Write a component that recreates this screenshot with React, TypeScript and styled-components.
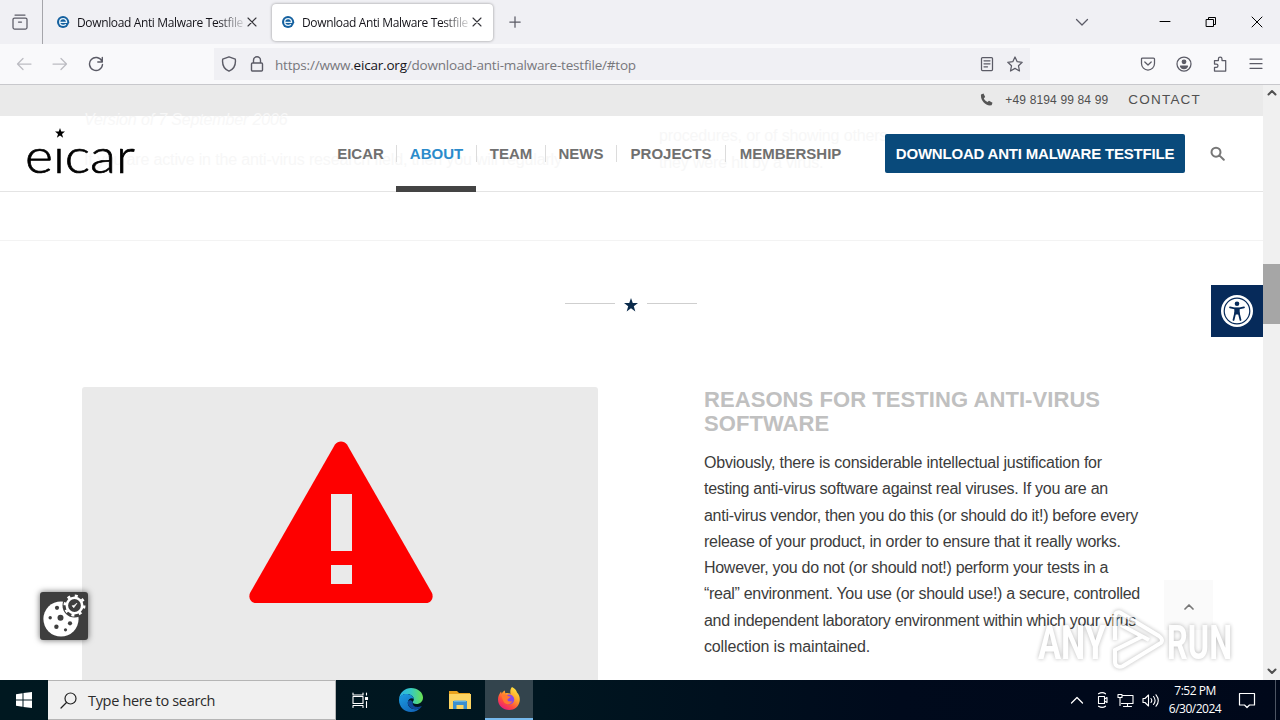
import React from 'react';
import styled, { createGlobalStyle, css } from 'styled-components';

const GlobalStyle = createGlobalStyle`
  * {
    box-sizing: border-box;
  }

  body {
    margin: 0;
    overflow: hidden;
    font-family: 'Liberation Sans', Arial, sans-serif;
  }

  svg {
    display: block;
    flex-shrink: 0;
  }
`;

const Screen = styled.div`
  display: flex;
  flex-direction: column;
  width: 1280px;
  height: 720px;
  overflow: hidden;
  background: #fff;
`;

/* ---------- browser chrome ---------- */

const TabBar = styled.div`
  display: flex;
  align-items: center;
  height: 44px;
  background: #f0f0f4;
  color: #15141a;
`;

const RecentTabs = styled.div`
  display: flex;
  align-items: center;
  justify-content: center;
  width: 43px;
  height: 44px;
  padding-right: 2px;
  margin-right: 4px;
  border-right: 1px solid #a5a5aa;
`;

const TabItem = styled.div<{ $active?: boolean }>`
  display: flex;
  align-items: center;
  width: 221px;
  height: 37px;
  margin-right: 4px;
  padding-left: 9px;
  border-radius: 4px;

  ${({ $active }) => $active && css`
    background: #fff;
    box-shadow: 0 0 3px rgba(0, 0, 0, 0.4);
  `}
`;

const TabTitle = styled.div`
  width: 168px;
  margin: 1px 2px 0 7px;
  overflow: hidden;
  white-space: nowrap;
  font-family: 'Open Sans', sans-serif;
  font-size: 12px;
  line-height: 18px;
  letter-spacing: -0.36px;
  mask-image: linear-gradient(to right, #000 140px, rgba(0, 0, 0, 0.15) 166px);
`;

const NewTab = styled.div`
  margin-left: 12px;
`;

const WindowControls = styled.div`
  display: flex;
  align-items: center;
  gap: 34px;
  margin-left: auto;
  padding-right: 17px;
`;

const ListTabs = styled.div`
  margin-right: 36px;
`;

const NavBar = styled.div`
  display: flex;
  align-items: center;
  height: 41px;
  border-bottom: 1px solid #c8c8cc;
  background: #f9f9fb;
`;

const NavButtons = styled.div`
  display: flex;
  align-items: center;
  gap: 20px;
  width: 214px;
  padding-left: 16px;
`;

const UrlBar = styled.div`
  display: flex;
  align-items: center;
  width: 816px;
  height: 32px;
  padding: 0 7px;
  background: #f0f0f4;
`;

const LockHolder = styled.div`
  margin: 0 10px 0 12px;
`;

const Url = styled.div`
  flex: 1;
  padding-top: 2px;
  white-space: nowrap;
  font-family: 'Open Sans', sans-serif;
  font-size: 13.5px;
  line-height: 20px;
  letter-spacing: -0.2px;
  color: #77777c;
`;

const Host = styled.span`
  color: #15141a;
`;

const UrlActions = styled.div`
  display: flex;
  align-items: center;
  gap: 12px;
`;

const Toolbar = styled.div`
  display: flex;
  align-items: center;
  gap: 20px;
  margin-left: auto;
  padding-right: 16px;
`;

/* ---------- page ---------- */

const Viewport = styled.div`
  display: flex;
  height: 595px;
`;

const Page = styled.div`
  position: relative;
  display: flex;
  flex-direction: column;
  width: 1263px;
  overflow: hidden;
  background: #fff;

  > * {
    flex-shrink: 0;
  }
`;

const Scrollbar = styled.div`
  display: flex;
  flex-direction: column;
  align-items: center;
  width: 17px;
  padding: 3px 0 4px;
  background: #f0f0f0;
`;

const Thumb = styled.div`
  width: 17px;
  height: 60px;
  margin: 166px 0 auto;
  background: #a6a6a6;
`;

const TopBar = styled.div`
  display: flex;
  align-items: center;
  justify-content: flex-end;
  height: 31px;
  padding: 0 62px 2px 0;
  background: #eaeaea;
  color: #505050;
`;

const Phone = styled.div`
  width: 104px;
  margin: 0 19px 0 12px;
  white-space: nowrap;
  font-size: 12px;
  letter-spacing: 0.15px;
`;

const Contact = styled.div`
  font-size: 13.5px;
  letter-spacing: 1.2px;
`;

const Header = styled.div`
  position: relative;
  display: flex;
  align-items: center;
  height: 76px;
  border-bottom: 1px solid #e4e4e4;
`;

const Ghost = styled.div<{ $left: number; $top: number; $italic?: boolean }>`
  position: absolute;
  left: ${({ $left }) => $left}px;
  top: ${({ $top }) => $top}px;
  white-space: nowrap;
  font-size: 16px;
  line-height: 20px;
  letter-spacing: -0.15px;
  font-style: ${({ $italic }) => ($italic ? 'italic' : 'normal')};
  color: #f7f7f7;
`;

const Logo = styled.div`
  position: relative;
  width: 325px;
  height: 75px;
  padding-left: 25px;
`;

const LogoText = styled.div`
  width: 110px;
  transform: scaleX(1.115);
  transform-origin: left;
  font-family: Lato, sans-serif;
  font-weight: 300;
  font-size: 48px;
  line-height: 77px;
  color: #000;
  -webkit-text-stroke: 0.7px #000;
`;

const LogoStar = styled.div`
  position: absolute;
  left: 55px;
  top: 12px;
`;

const Menu = styled.div`
  position: relative;
  display: flex;
  width: 560px;
`;

const MenuItem = styled.div<{ $width: number; $active?: boolean }>`
  position: relative;
  display: flex;
  align-items: center;
  justify-content: center;
  width: ${({ $width }) => $width}px;
  height: 76px;
  padding-right: 1px;
  white-space: nowrap;
  font-size: 15px;
  font-weight: bold;
  color: ${({ $active }) => ($active ? '#2b8bcb' : '#707070')};

  &:not(:last-child)::before {
    content: '';
    position: absolute;
    right: 0;
    top: 29px;
    width: 1px;
    height: 17px;
    background: #dcdcdc;
  }

  ${({ $active }) => $active && css`
    &::after {
      content: '';
      position: absolute;
      left: -1px;
      bottom: 0;
      width: 80px;
      height: 6px;
      background: #444;
    }
  `}
`;

const DownloadButton = styled.div`
  position: relative;
  display: flex;
  align-items: center;
  justify-content: center;
  width: 300px;
  height: 39px;
  margin-right: 25px;
  border-radius: 2px;
  background: #094a7b;
  white-space: nowrap;
  font-size: 15px;
  font-weight: bold;
  letter-spacing: -0.2px;
  color: #fff;
`;

const Strip = styled.div`
  height: 49px;
  border-bottom: 1px solid #f3f3f3;
`;

const Divider = styled.div`
  display: flex;
  align-items: center;
  justify-content: center;
  gap: 9px;
  height: 126px;
  padding: 0 1px 1px 0;
`;

const Rule = styled.div`
  width: 50px;
  height: 1px;
  background: #cfcfcf;
`;

const DividerStar = styled.div`
  padding-top: 2px;
`;

const Section = styled.div`
  display: flex;
  padding: 20px 0 0 82px;
`;

const Figure = styled.div`
  display: flex;
  justify-content: center;
  width: 516px;
  height: 320px;
  padding: 54px 0 0 1px;
  border-radius: 3px;
  background: #eaeaea;
`;

const Article = styled.div`
  margin-left: 106px;
`;

const Heading = styled.h3`
  margin: 0;
  padding-top: 1px;
  white-space: nowrap;
  font-size: 22px;
  line-height: 24px;
  letter-spacing: 0.07px;
  color: #c0c0c0;
`;

const Paragraph = styled.div`
  margin-top: 14px;
  color: #3c3c3c;
`;

const Line = styled.div<{ $spacing: number }>`
  white-space: nowrap;
  font-size: 16px;
  line-height: 26.3px;
  letter-spacing: ${({ $spacing }) => $spacing}px;
`;

const AccessButton = styled.div`
  position: absolute;
  right: 0;
  top: 200px;
  display: flex;
  align-items: center;
  justify-content: center;
  width: 52px;
  height: 52px;
  background: #062a5a;
`;

const CookieButton = styled.div`
  position: absolute;
  left: 40px;
  top: 507px;
  width: 48px;
  height: 48px;
  border-radius: 3px;
  background: #3e3e3e;
  box-shadow: 0 0 6px rgba(0, 0, 0, 0.6);
`;

const ScrollTop = styled.div`
  position: absolute;
  left: 1164px;
  top: 495px;
  display: flex;
  align-items: center;
  justify-content: center;
  width: 49px;
  height: 50px;
  padding-top: 3px;
  background: #fafafa;
`;

const Watermark = styled.div`
  position: absolute;
  left: 1038px;
  top: 522px;
  width: 210px;
  height: 66px;
  opacity: 0.7;
  filter: drop-shadow(0 0 2px rgba(0, 0, 0, 0.4));
`;

/* ---------- taskbar ---------- */

const Taskbar = styled.div`
  display: flex;
  height: 40px;
  background: linear-gradient(to right, #001820 0, #001620 540px, #000a1c 900px, #00081a 100%);
  font-family: 'Open Sans', sans-serif;
  color: #fff;
`;

const TaskButton = styled.div<{ $active?: boolean }>`
  display: flex;
  align-items: center;
  justify-content: center;
  width: 48px;
  height: 40px;
  margin-right: 1px;

  ${({ $active }) => $active && css`
    border-bottom: 2px solid #76b9ed;
    background: #33444d;
  `}
`;

const StartButton = styled(TaskButton)`
  margin-right: 0;
`;

const TaskViewButton = styled(TaskButton)`
  margin-right: 3px;
`;

const SearchBox = styled.div`
  display: flex;
  align-items: center;
  gap: 11px;
  width: 288px;
  padding-left: 12px;
  border: 1px solid #b5b5b5;
  border-left: 0;
  background: #f0f0f0;
  font-size: 14.5px;
  letter-spacing: -0.33px;
  color: #2b2b2b;
`;

const Tray = styled.div`
  display: flex;
  align-items: center;
  gap: 8px;
  margin-left: auto;
`;

const Clock = styled.div`
  width: 56px;
  margin-right: -1px;
  text-align: center;
  white-space: nowrap;
  font-size: 12px;
  line-height: 18px;
  letter-spacing: -0.5px;
`;

const ShowDesktop = styled.div`
  width: 5px;
  height: 40px;
  margin-left: 3px;
  border-left: 1px solid #4d5563;
`;

type GlyphProps = {
  size?: number;
  color?: string;
  stroke?: number;
  children: React.ReactNode;
};

const Glyph = ({ size = 16, color = '#5b5b66', stroke = 1.25, children }: GlyphProps) => (
  <svg
    width={size}
    height={size}
    viewBox={`0 0 ${size} ${size}`}
    fill="none"
    stroke={color}
    strokeWidth={stroke}
    strokeLinecap="round"
    strokeLinejoin="round"
  >
    {children}
  </svg>
);

const Favicon = () => (
  <svg width="14" height="14" viewBox="0 0 14 14">
    <circle cx="7" cy="7" r="6" fill="#14609f" />
    <path d="M3.6 7.4h7c.2-2.300-1.400-3.700-3.400-3.700S3.700 5.200 3.700 7.100s1.500 3.300 3.500 3.300c1.200 0 2-.4 2.700-1.100" fill="none" stroke="#e8f3fa" strokeWidth="1.300" />
    <path d="M12.200 4.500l1.300 3-1.600 1z" fill="#14609f" />
  </svg>
);

const CloseIcon = () => (
  <Glyph size={10} color="#35343a" stroke={1.100}>
    <path d="M1 1l8 8M9 1l-8 8" />
  </Glyph>
);

const Star = ({ size, color }: { size: number; color: string }) => (
  <svg width={size} height={size} viewBox="0 0 20 20">
    <path d="M10 0l2.500 7.200H20l-6 4.600 2.200 7.500L10 14.800 3.800 19.300 6 11.800 0 7.200h7.500z" fill={color} />
  </svg>
);

const WarningSign = () => (
  <svg width="184" height="163" viewBox="0 0 184 163">
    <path
      d="M86 3.500C89-.5 95-.5 98 3.500L183 152c2 5-1 10-6 10H7c-5 0-8-5-6-10z"
      fill="#fe0000"
    />
    <path d="M82 53h21v57H82zM82 124h21v19H82z" fill="#eaeaea" />
  </svg>
);

const AccessIcon = () => (
  <svg width="32" height="32" viewBox="0 0 32 32">
    <circle cx="16" cy="16" r="16" fill="#fff" />
    <circle cx="16" cy="16" r="12.800" fill="none" stroke="#062a5a" strokeWidth="1.200" />
    <circle cx="16" cy="8.700" r="2.300" fill="#062a5a" />
    <path
      d="M9 12.300l4.500 1h5L23 12.300M14.200 18l-1.700 7M17.800 18l1.700 7"
      fill="none"
      stroke="#062a5a"
      strokeWidth="1.800"
      strokeLinecap="round"
    />
    <path d="M13.300 12.800h5.400v6.700h-5.400z" fill="#062a5a" />
  </svg>
);

const CookieIcon = () => (
  <svg width="48" height="48" viewBox="0 0 48 48">
    <circle cx="21" cy="27" r="17.600" fill="#fff" />
    <g fill="#3e3e3e">
      <circle cx="20.500" cy="25.800" r="3" />
      <circle cx="17" cy="15.800" r="2.100" />
      <circle cx="10.200" cy="25.700" r="1.700" />
      <circle cx="16.400" cy="34.700" r="2.200" />
      <circle cx="30" cy="31.300" r="2.100" />
      <circle cx="25.500" cy="37.800" r="1.600" />
      <circle cx="34.500" cy="13.500" r="12" />
    </g>
    <circle cx="34.500" cy="13.500" r="7.700" fill="none" stroke="#fff" strokeWidth="2.600" />
    <circle cx="34.500" cy="13.500" r="9.700" fill="none" stroke="#fff" strokeWidth="2.600" strokeDasharray="3 4.618" />
    <path d="M32 13.800l1.800 2 3.200-4.600-3 2.200z" fill="#fff" stroke="#fff" strokeWidth="0.600" />
  </svg>
);

const WatermarkDrawing = () => (
  <svg width="210" height="66" viewBox="0 0 210 66" fontFamily="Roboto, sans-serif" fontWeight="700" fontSize="49" fill="#fff">
    <text x="0" y="52" textLength="68" lengthAdjust="spacingAndGlyphs">ANY</text>
    <text x="129" y="52" textLength="65" lengthAdjust="spacingAndGlyphs">RUN</text>
    <path
      d="M77 33V10c0-4 3-6 6-4l38 23c4 3 4 6 0 8L85 59c-4 2-8 0-8-4V43l28-14M83 18l28 15"
      fill="none"
      stroke="#fff"
      strokeWidth="4"
    />
  </svg>
);

const EdgeIcon = () => (
  <svg width="24" height="24" viewBox="0 0 24 24">
    <defs>
      <linearGradient id="edgeTop" x1="0" x2="1" y1="0.300" y2="0.300">
        <stop offset="0" stopColor="#2bb3e8" />
        <stop offset="0.500" stopColor="#36c9c3" />
        <stop offset="1" stopColor="#6ae34f" />
      </linearGradient>
      <linearGradient id="edgeBody" x1="0" x2="0.800" y1="0" y2="1">
        <stop offset="0" stopColor="#1b9de2" />
        <stop offset="1" stopColor="#1263b8" />
      </linearGradient>
    </defs>
    <path d="M0 11C1 4 6 0 12 0c7 0 12 4.500 12 9.500 0 4-3 6.500-6.500 6.500-3 0-4-1.200-3.700-2 .5-1 1-1.500 1-3C14.800 8 11 6 7.500 6 4 6 1 8 0 11z" fill="url(#edgeTop)" />
    <path d="M0 12c0-3.500 3.200-6 7.200-6 4.300 0 7.300 2.300 7.600 5-2-1.700-5.800-.3-6 3.500C8.600 19 13 22 18 21c2-.4 3-1 4.300-2C20 22 16 24 12 24 5 24 0 18.500 0 12z" fill="url(#edgeBody)" />
    <path d="M8.800 14.500c0 4.500 4.700 7.500 9.200 6.500 2-.4 3-1 4.300-2 .5-.8.300-1-.3-.8-4.500 1.800-9 .3-8.200-4.200-1.500-2.500-5-2-5 .5z" fill="#10499b" />
  </svg>
);

const FolderIcon = () => (
  <svg width="22" height="18" viewBox="0 0 22 18">
    <path d="M0 0h8l2 2h11v5H0z" fill="#e8a21d" />
    <path d="M0 3h22v15H0z" fill="#fcd462" />
    <path d="M4 10h14v8h-3.500v-4h-7v4H4z" fill="#3b8fd0" />
    <path d="M5 9.500h12v1.500H5z" fill="#64b2e4" />
  </svg>
);

const FirefoxIcon = () => (
  <svg width="24" height="24" viewBox="0 0 24 24">
    <defs>
      <linearGradient id="fox" x1="0.850" x2="0.200" y1="0" y2="1">
        <stop offset="0" stopColor="#fff044" />
        <stop offset="0.400" stopColor="#ffa12b" />
        <stop offset="0.700" stopColor="#ff4b3e" />
        <stop offset="1" stopColor="#e31587" />
      </linearGradient>
    </defs>
    <path d="M15 0c3 1.600 4.500 3.500 5 5.500 2.500 2.500 3.200 6 2.600 9C21.700 19.500 17.500 23 12.200 23 6 23 1 18.500 1 12.500 1 9.500 2.200 7 4 4.500l.8 2.200C5.500 5.200 6.500 4.300 7.800 3.600l.5 2.700c2-.6 3.900-.3 5.200.7C13 4.500 13.300 2 15 0z" fill="url(#fox)" />
    <circle cx="12.200" cy="12.500" r="5" fill="#8748e8" />
    <path d="M4.500 8.500c2-1.500 5-1.500 7 .7l2 .3c.5 1.500-2.500 1.700-3 3-.4 1.500 2.500 3 5 1.500-1 3-4.500 4-7 2.500-2-1.200-3-3.500-4-8z" fill="#ff7a30" />
  </svg>
);

const menuItems = [
  { label: 'EICAR', width: 72 },
  { label: 'ABOUT', width: 80, active: true },
  { label: 'TEAM', width: 69 },
  { label: 'NEWS', width: 71 },
  { label: 'PROJECTS', width: 109 },
  { label: 'MEMBERSHIP', width: 130 },
];

const paragraph = [
  { text: 'Obviously, there is considerable intellectual justification for', spacing: -0.23 },
  { text: 'testing anti-virus software against real viruses. If you are an', spacing: -0.28 },
  { text: 'anti-virus vendor, then you do this (or should do it!) before every', spacing: -0.28 },
  { text: 'release of your product, in order to ensure that it really works.', spacing: -0.28 },
  { text: 'However, you do not (or should not!) perform your tests in a', spacing: -0.29 },
  { text: '“real” environment. You use (or should use!) a secure, controlled', spacing: -0.3 },
  { text: 'and independent laboratory environment within which your virus', spacing: -0.32 },
  { text: 'collection is maintained.', spacing: -0.15 },
];

const BrowserTab = ({ active }: { active?: boolean }) => (
  <TabItem $active={active}>
    <Favicon />
    <TabTitle>Download Anti Malware Testfile</TabTitle>
    <CloseIcon />
  </TabItem>
);

const BrowserChrome = () => (
  <>
    <TabBar>
      <RecentTabs>
        <Glyph>
          <path d="M3 1h10M2.500 4h11a1.500 1.500 0 0 1 1.500 1.500v8a1.500 1.500 0 0 1-1.500 1.500h-11A1.500 1.500 0 0 1 1 13.500v-8A1.500 1.500 0 0 1 2.500 4zM6.500 8h3" />
        </Glyph>
      </RecentTabs>
      <BrowserTab />
      <BrowserTab active />
      <NewTab>
        <Glyph size={12}><path d="M6 .8v10.400M.8 6h10.400" /></Glyph>
      </NewTab>
      <WindowControls>
        <ListTabs>
          <Glyph size={14}><path d="M1.500 4.500L7 10l5.500-5.500" /></Glyph>
        </ListTabs>
        <Glyph size={12} color="#000" stroke={1}><path d="M1 5.500h10" /></Glyph>
        <Glyph size={12} color="#000" stroke={1}><path d="M1.500 3.500h7v7h-7zM3.500 3.500v-2h7v7h-2" /></Glyph>
        <Glyph size={12} color="#000" stroke={1}><path d="M1 1l10 10M11 1L1 11" /></Glyph>
      </WindowControls>
    </TabBar>
    <NavBar>
      <NavButtons>
        <Glyph color="#bcbcc2"><path d="M15 8H1.500M7 2.500L1.500 8 7 13.500" /></Glyph>
        <Glyph color="#bcbcc2"><path d="M1 8h13.500M9 2.500L14.500 8 9 13.500" /></Glyph>
        <Glyph stroke={1.400}><path d="M13.800 5A6.500 6.500 0 1 0 14.500 8.500M14.300 1.500V6H9.800" /></Glyph>
      </NavButtons>
      <UrlBar>
        <Glyph stroke={1.400}><path d="M8 .8l6.300 2.300C15 8.500 13 13 8 15.200 3 13 1 8.500 1.700 3.100z" /></Glyph>
        <LockHolder>
          <Glyph stroke={1.400}><path d="M3.500 7h9a1 1 0 0 1 1 1v6a1 1 0 0 1-1 1h-9a1 1 0 0 1-1-1V8a1 1 0 0 1 1-1zM4.500 7V4.300a3.500 3.500 0 0 1 7 0V7" /></Glyph>
        </LockHolder>
        <Url>https://www.<Host>eicar.org</Host>/download-anti-malware-testfile/#top</Url>
        <UrlActions>
          <Glyph><path d="M3.500 1.500h9a1 1 0 0 1 1 1v11a1 1 0 0 1-1 1h-9a1 1 0 0 1-1-1v-11a1 1 0 0 1 1-1zM5 4.800h6M5 7.800h6M5 10.800h3.500" /></Glyph>
          <Glyph><path d="M8 1l2.200 4.700 5 .6-3.700 3.500 1 5.200L8 12.400 3.500 15l1-5.200L.8 6.300l5-.6z" /></Glyph>
        </UrlActions>
      </UrlBar>
      <Toolbar>
        <Glyph><path d="M2.500 2h11a1 1 0 0 1 1 1v4.500a6.500 6.500 0 0 1-13 0V3a1 1 0 0 1 1-1zM4.800 6L8 9l3.200-3" /></Glyph>
        <Glyph>
          <circle cx="8" cy="8" r="7" />
          <circle cx="8" cy="5.800" r="1.800" fill="#5b5b66" />
          <path d="M4.500 10h7c-.5 1.800-2 2.500-3.500 2.500S5 11.800 4.500 10z" fill="#5b5b66" />
        </Glyph>
        <Glyph><path d="M2.500 15h11.200V4.500H10V3a1.800 1.800 0 0 0-3.600 0v1.500H2.500V8h1.800a1.700 1.700 0 0 1 0 3.400H2.500z" /></Glyph>
        <Glyph><path d="M2 3h12M2 7.700h12M2 12.300h12" /></Glyph>
      </Toolbar>
    </NavBar>
  </>
);

const PageHeader = () => (
  <>
    <TopBar>
      <svg width="13" height="13" viewBox="0 0 13 13">
        <path d="M1 1.500L3.500.5 5.200 4 3.800 5.200c.6 1.600 2 3 3.700 3.800L9 7.700l3.500 2-.9 2.600C5.500 13.500.3 7.500 1 1.500z" fill="#555" />
      </svg>
      <Phone>+49 8194 99 84 99</Phone>
      <Contact>CONTACT</Contact>
    </TopBar>
    <Header>
      <Ghost $left={84} $top={-6} $italic>Version of 7 September 2006</Ghost>
      <Ghost $left={84} $top={34}>If you are active in the anti-virus research field, then you will regularly</Ghost>
      <Ghost $left={659} $top={10}>procedures, or of showing others</Ghost>
      <Ghost $left={659} $top={37}>they were hit by a virus.</Ghost>
      <Logo>
        <LogoText aria-label="eicar">eıcar</LogoText>
        <LogoStar><Star size={10} color="#000" /></LogoStar>
      </Logo>
      <Menu>
        {menuItems.map((item) => (
          <MenuItem key={item.label} $width={item.width} $active={item.active}>{item.label}</MenuItem>
        ))}
      </Menu>
      <DownloadButton>DOWNLOAD ANTI MALWARE TESTFILE</DownloadButton>
      <Glyph size={15} color="#777" stroke={2}><path d="M10.500 6.200a4.500 4.500 0 1 1-9 0 4.500 4.500 0 0 1 9 0zM9.600 9.600l4.200 4.200" /></Glyph>
    </Header>
  </>
);

const WebPage = () => (
  <Viewport>
    <Page>
      <PageHeader />
      <Strip />
      <Divider>
        <Rule />
        <DividerStar><Star size={14} color="#0b2b4b" /></DividerStar>
        <Rule />
      </Divider>
      <Section>
        <Figure><WarningSign /></Figure>
        <Article>
          <Heading>REASONS FOR TESTING ANTI-VIRUS<br />SOFTWARE</Heading>
          <Paragraph>
            {paragraph.map((line) => (
              <Line key={line.text} $spacing={line.spacing}>{line.text}</Line>
            ))}
          </Paragraph>
        </Article>
      </Section>
      <AccessButton><AccessIcon /></AccessButton>
      <CookieButton><CookieIcon /></CookieButton>
      <ScrollTop>
        <Glyph size={10} color="#777" stroke={1.700}><path d="M1 7l4-4 4 4" /></Glyph>
      </ScrollTop>
      <Watermark><WatermarkDrawing /></Watermark>
    </Page>
    <Scrollbar>
      <Glyph size={10} color="#505050" stroke={2}><path d="M1.500 6.500L5 3l3.500 3.500" /></Glyph>
      <Thumb />
      <Glyph size={10} color="#505050" stroke={2}><path d="M1.500 3.500L5 7l3.500-3.500" /></Glyph>
    </Scrollbar>
  </Viewport>
);

const WindowsTaskbar = () => (
  <Taskbar>
    <StartButton>
      <svg width="16" height="16" viewBox="0 0 16 16">
        <path d="M0 2.200l6.500-.9v6.200H0zM7.500 1.100L16 0v7.500H7.500zM0 8.500h6.500v6.200L0 13.800zM7.500 8.500H16V16l-8.500-1.100z" fill="#fff" />
      </svg>
    </StartButton>
    <SearchBox>
      <Glyph size={17} color="#222" stroke={1.200}><circle cx="10.500" cy="6.500" r="5.500" /><path d="M6.500 10.500L1 16" /></Glyph>
      Type here to search
    </SearchBox>
    <TaskViewButton>
      <Glyph size={17} color="#fff" stroke={1.100}>
        <path d="M1 1v2h10V1M1 4.500h10v7H1zM1 15.500v-2h10v2M14.500 1v2M14.500 9.500v6" />
        <path d="M13.500 5.500h2v2h-2z" fill="#fff" />
      </Glyph>
    </TaskViewButton>
    <TaskButton><EdgeIcon /></TaskButton>
    <TaskButton><FolderIcon /></TaskButton>
    <TaskButton $active><FirefoxIcon /></TaskButton>
    <Tray>
      <Glyph size={16} color="#fff"><path d="M2.500 11L8 5.500l5.500 5.500" /></Glyph>
      <Glyph size={16} color="#fff" stroke={1.100}><path d="M5.500 4.500h6v7h-6zM11.500 7L14 5.500v5L11.500 9M5.500 1.800c2.500-1.500 5-1.500 7 0M5.500 14.200c2.500 1.500 5 1.500 7 0" /></Glyph>
      <Glyph size={17} color="#fff" stroke={1.100}><path d="M6 3.500h10v8H4.500M1 2.500h4v3H1zM3 5.500v8M10.500 11.500v3M6.500 14.500h8" /></Glyph>
      <Glyph size={17} color="#fff" stroke={1.100}><path d="M1 6.500h2L6.500 3v11L3 10.500H1zM9 6.500c1 1.300 1 2.700 0 4M11.500 4.500c2 2.500 2 5.500 0 8M14 2.800c2.800 3.500 2.800 7.900 0 11.400" /></Glyph>
      <Clock>7:52 PM<br />6/30/2024</Clock>
      <Glyph size={34} color="#fff" stroke={1.200}><path d="M9.500 10.500h15v11.500h-5L17 24.500 14.500 22h-5z" /></Glyph>
      <ShowDesktop />
    </Tray>
  </Taskbar>
);

const App = () => (
  <Screen>
    <GlobalStyle />
    <BrowserChrome />
    <WebPage />
    <WindowsTaskbar />
  </Screen>
);

export default App;
